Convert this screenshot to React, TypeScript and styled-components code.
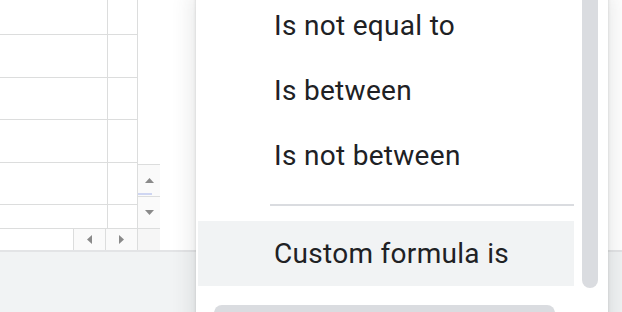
import React from "react";
import styled, { createGlobalStyle } from "styled-components";

const Global = createGlobalStyle`
  html, body { margin: 0; padding: 0; background: #ffffff; }
  body { font-family: Roboto, "Liberation Sans", Arial, sans-serif; }
  * { box-sizing: border-box; }
`;

const Frame = styled.div`
  position: relative;
  width: 622px;
  height: 312px;
  overflow: hidden;
  display: flex;
  flex-direction: column;
  background: #ffffff;
`;

const SheetArea = styled.div`
  display: flex;
  height: 250px;
`;

const GridColumn = styled.div`
  width: 137px;
  display: flex;
  flex-direction: column;
`;

const Cells = styled.div`
  height: 228px;
  display: flex;
  flex-direction: column;
  overflow: hidden;
`;

const Row = styled.div<{ $h: number; $last?: boolean }>`
  height: ${(p) => p.$h}px;
  flex-shrink: 0;
  display: flex;
  border-bottom: ${(p) => (p.$last ? "none" : "1px solid #dcdddd")};
`;

const Cell = styled.div<{ $w?: number }>`
  width: ${(p) => (p.$w ? `${p.$w}px` : "auto")};
  flex: ${(p) => (p.$w ? "0 0 auto" : "1")};
  border-right: ${(p) => (p.$w ? "1px solid #dcdddd" : "none")};
`;

const HScroll = styled.div`
  height: 22px;
  display: flex;
  border-top: 1px solid #dcdddd;
`;

const HSpacer = styled.div`
  width: 73px;
`;

const ArrowButton = styled.div<{ $w?: number; $h?: number }>`
  position: relative;
  width: ${(p) => (p.$w ? `${p.$w}px` : "auto")};
  height: ${(p) => (p.$h ? `${p.$h}px` : "auto")};
  display: flex;
  align-items: center;
  justify-content: center;
  background: #fafafa;
`;

const HButton = styled(ArrowButton)`
  border-left: 1px solid #dcdddd;
`;

const VScroll = styled.div`
  width: 23px;
  display: flex;
  flex-direction: column;
  border-left: 1px solid #dcdddd;
`;

const VTrack = styled.div`
  flex: 1;
  background: #ffffff;
`;

const VButton = styled(ArrowButton)<{ $thumb?: boolean }>`
  border-top: 1px solid #dcdddd;
  &::after {
    content: "";
    display: ${(p) => (p.$thumb ? "block" : "none")};
    position: absolute;
    left: 0;
    bottom: 1px;
    width: 14px;
    height: 2px;
    background: #cfd6f2;
  }
`;

const Corner = styled.div`
  height: 22px;
  border-top: 1px solid #dcdddd;
  background: #f6f6f6;
`;

const Panel = styled.div`
  flex: 1;
  background: #ffffff;
`;

const BottomBar = styled.div`
  flex: 1;
  background: #f1f3f4;
  border-top: 2px solid #e3e4e6;
`;

const Menu = styled.div`
  position: absolute;
  left: 196px;
  top: -7px;
  width: 412px;
  height: 340px;
  background: #ffffff;
  padding-left: 2px;
  display: flex;
  flex-direction: column;
  box-shadow: 0 4px 20px 4px rgba(60, 64, 67, 0.12), 0 1px 3px rgba(60, 64, 67, 0.2);
`;

const MenuBody = styled.div`
  display: flex;
  align-items: flex-start;
  height: 295px;
`;

const List = styled.div`
  width: 376px;
  display: flex;
  flex-direction: column;
`;

const Item = styled.div<{ $active?: boolean }>`
  height: 65px;
  line-height: 65px;
  padding-left: 76px;
  font-family: Roboto, "Liberation Sans", Arial, sans-serif;
  font-size: 28px;
  letter-spacing: 0.3px;
  color: #202124;
  white-space: nowrap;
  background: ${(p) => (p.$active ? "#f1f3f4" : "transparent")};
`;

const Separator = styled.div`
  height: 33px;
  display: flex;
  align-items: center;
  padding-left: 72px;
  &::before {
    content: "";
    flex: 1;
    height: 2px;
    background: #dadce0;
  }
`;

const VScrollbar = styled.div`
  width: 16px;
  height: 295px;
  margin-left: 8px;
  background: #dadce0;
  border-radius: 0 0 8px 8px;
`;

const HScrollbar = styled.div`
  width: 341px;
  height: 16px;
  margin-left: 16px;
  margin-top: 17px;
  background: #dadce0;
  border-radius: 8px;
`;

type Dir = "up" | "down" | "left" | "right";

const Triangle: React.FC<{ dir: Dir }> = ({ dir }) => {
  const pts: Record<Dir, string> = {
    up: "0,5 4.5,0 9,5",
    down: "0,0 4.5,5 9,0",
    left: "5,0 0,4.5 5,9",
    right: "0,0 5,4.5 0,9",
  };
  const vertical = dir === "up" || dir === "down";
  return (
    <svg
      width={vertical ? 9 : 5}
      height={vertical ? 5 : 9}
      viewBox={vertical ? "0 0 9 5" : "0 0 5 9"}
    >
      <polygon points={pts[dir]} fill="#8a8a8a" />
    </svg>
  );
};

const rowHeights = [35, 43, 42, 43, 42, 23];

export default function App() {
  return (
    <>
      <Global />
      <Frame>
        <SheetArea>
          <GridColumn>
            <Cells>
              {rowHeights.map((h, i) => (
                <Row key={i} $h={h} $last={i === rowHeights.length - 1}>
                  <Cell $w={108} />
                  <Cell />
                </Row>
              ))}
            </Cells>
            <HScroll>
              <HSpacer />
              <HButton $w={32}>
                <Triangle dir="left" />
              </HButton>
              <HButton $w={32}>
                <Triangle dir="right" />
              </HButton>
            </HScroll>
          </GridColumn>
          <VScroll>
            <VTrack />
            <VButton $h={32} $thumb>
              <Triangle dir="up" />
            </VButton>
            <VButton $h={32}>
              <Triangle dir="down" />
            </VButton>
            <Corner />
          </VScroll>
          <Panel />
        </SheetArea>
        <BottomBar />
        <Menu>
          <MenuBody>
            <List>
              <Item>Is not equal to</Item>
              <Item>Is between</Item>
              <Item>Is not between</Item>
              <Separator />
              <Item $active>Custom formula is</Item>
            </List>
            <VScrollbar />
          </MenuBody>
          <HScrollbar />
        </Menu>
      </Frame>
    </>
  );
}
